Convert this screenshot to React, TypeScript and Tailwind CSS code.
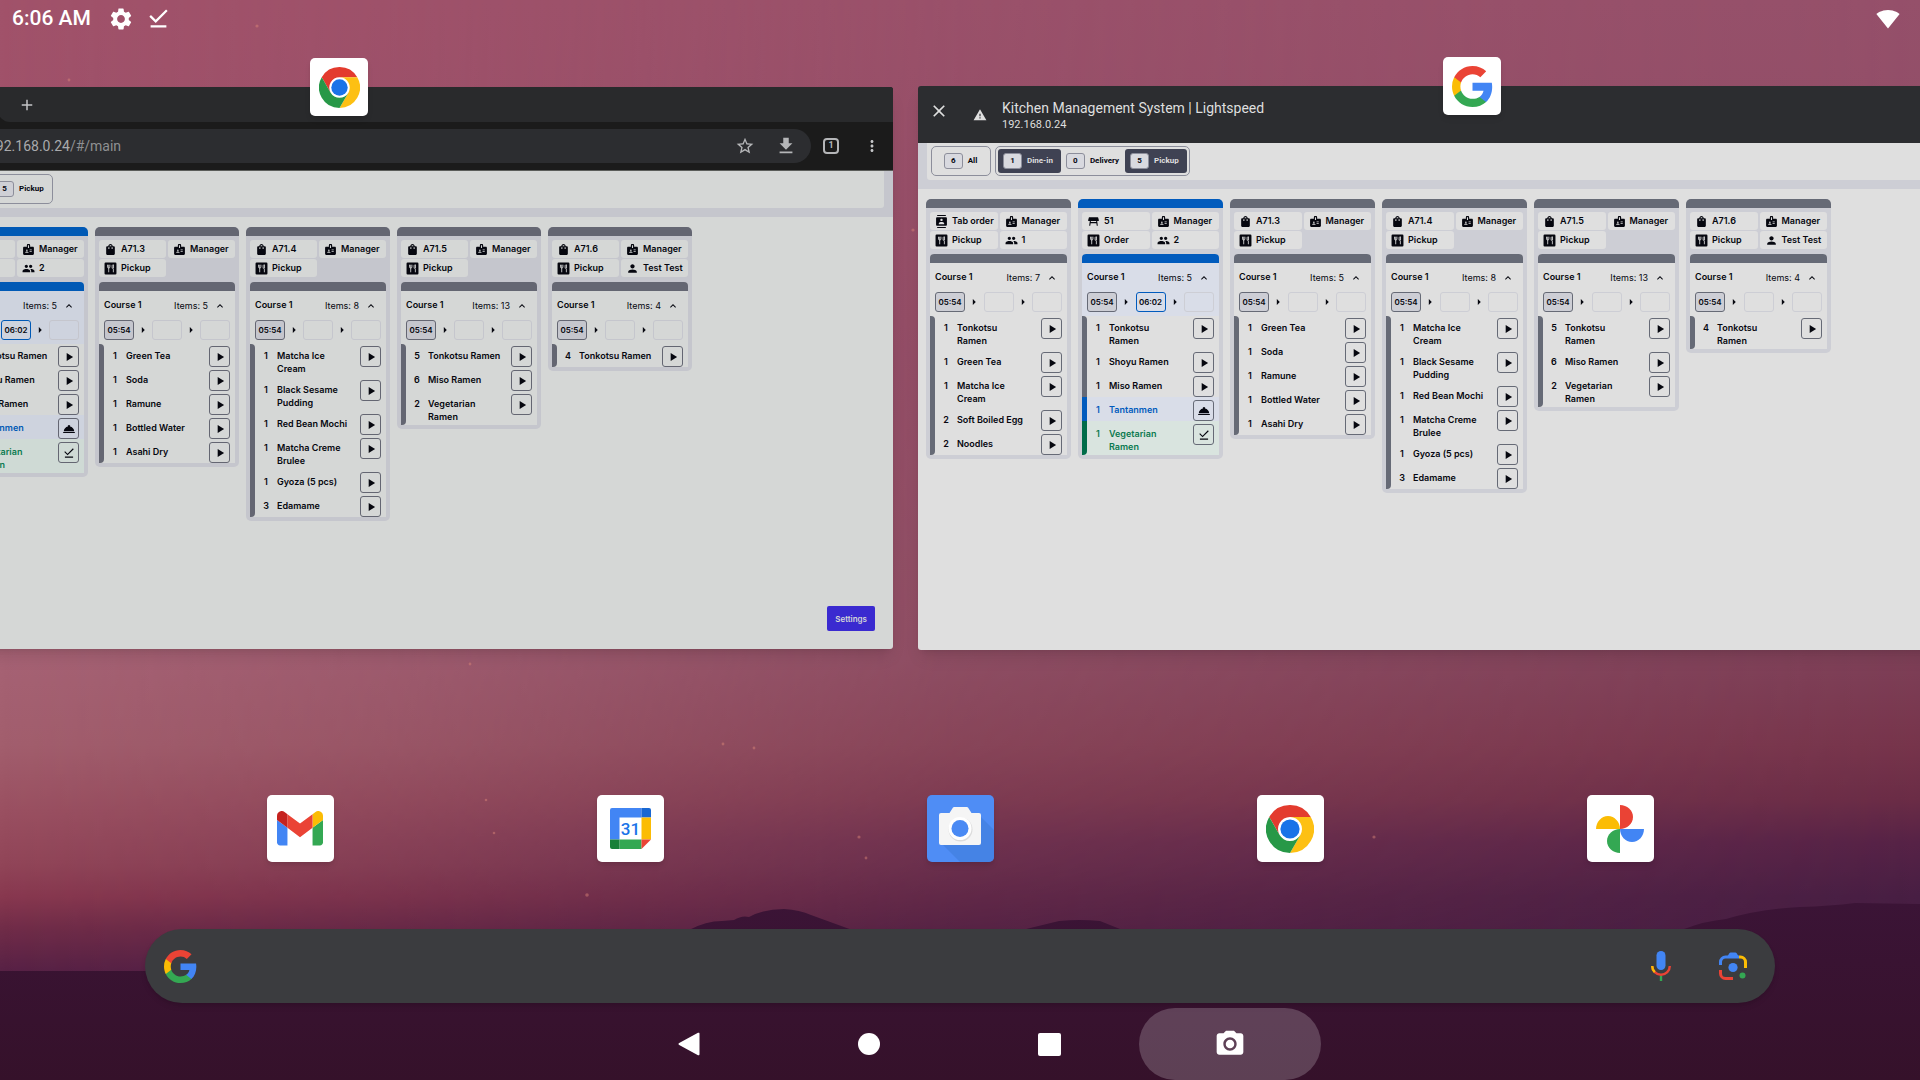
import React from 'react';
import type { IconType } from 'react-icons';
import {
  MdAdd,
  MdArrowRight,
  MdBadge,
  MdClose,
  MdContacts,
  MdDownloadDone,
  MdFileDownload,
  MdGroup,
  MdKeyboardArrowUp,
  MdMoreVert,
  MdPerson,
  MdPhotoCamera,
  MdPlayArrow,
  MdRoomService,
  MdSettings,
  MdShoppingBag,
  MdSignalWifi4Bar,
  MdStarBorder,
  MdTableRestaurant,
  MdWarning,
} from 'react-icons/md';

type ItemStatus = 'new' | 'started' | 'done';

interface OrderItem {
  qty: number;
  name: string;
  status?: ItemStatus;
}

interface OrderInfo {
  icon: React.ElementType;
  label: string;
}

interface Order {
  id: string;
  info: OrderInfo[];
  count: number;
  started?: string;
  items: OrderItem[];
}

const DiningIcon: React.FC<{ className?: string }> = ({ className }) => (
  <svg viewBox="0 0 24 24" className={className} aria-hidden="true">
    <rect x="1" y="1" width="22" height="22" rx="2" fill="currentColor" />
    <path
      d="M6.5 5v4a2.2 2.2 0 0 0 4.4 0V5M8.7 5v14M17.3 19v-6M15 6.5v5h2.6V5.2c-1.6 0-2.6.6-2.6 1.3z"
      fill="none"
      stroke="var(--page)"
      strokeWidth="1.6"
    />
  </svg>
);

const manager: OrderInfo = { icon: MdBadge, label: 'Manager' };
const pickup: OrderInfo = { icon: DiningIcon, label: 'Pickup' };

const orders: Order[] = [
  {
    id: 'tab',
    info: [{ icon: MdContacts, label: 'Tab order' }, manager, pickup, { icon: MdGroup, label: '1' }],
    count: 7,
    items: [
      { qty: 1, name: 'Tonkotsu Ramen' },
      { qty: 1, name: 'Green Tea' },
      { qty: 1, name: 'Matcha Ice Cream' },
      { qty: 2, name: 'Soft Boiled Egg' },
      { qty: 2, name: 'Noodles' },
    ],
  },
  {
    id: '51',
    info: [
      { icon: MdTableRestaurant, label: '51' },
      manager,
      { icon: DiningIcon, label: 'Order' },
      { icon: MdGroup, label: '2' },
    ],
    count: 5,
    started: '06:02',
    items: [
      { qty: 1, name: 'Tonkotsu Ramen' },
      { qty: 1, name: 'Shoyu Ramen' },
      { qty: 1, name: 'Miso Ramen' },
      { qty: 1, name: 'Tantanmen', status: 'started' },
      { qty: 1, name: 'Vegetarian Ramen', status: 'done' },
    ],
  },
  {
    id: 'A71.3',
    info: [{ icon: MdShoppingBag, label: 'A71.3' }, manager, pickup],
    count: 5,
    items: [
      { qty: 1, name: 'Green Tea' },
      { qty: 1, name: 'Soda' },
      { qty: 1, name: 'Ramune' },
      { qty: 1, name: 'Bottled Water' },
      { qty: 1, name: 'Asahi Dry' },
    ],
  },
  {
    id: 'A71.4',
    info: [{ icon: MdShoppingBag, label: 'A71.4' }, manager, pickup],
    count: 8,
    items: [
      { qty: 1, name: 'Matcha Ice Cream' },
      { qty: 1, name: 'Black Sesame Pudding' },
      { qty: 1, name: 'Red Bean Mochi' },
      { qty: 1, name: 'Matcha Creme Brulee' },
      { qty: 1, name: 'Gyoza (5 pcs)' },
      { qty: 3, name: 'Edamame' },
    ],
  },
  {
    id: 'A71.5',
    info: [{ icon: MdShoppingBag, label: 'A71.5' }, manager, pickup],
    count: 13,
    items: [
      { qty: 5, name: 'Tonkotsu Ramen' },
      { qty: 6, name: 'Miso Ramen' },
      { qty: 2, name: 'Vegetarian Ramen' },
    ],
  },
  {
    id: 'A71.6',
    info: [{ icon: MdShoppingBag, label: 'A71.6' }, manager, pickup, { icon: MdPerson, label: 'Test Test' }],
    count: 4,
    items: [{ qty: 4, name: 'Tonkotsu Ramen' }],
  },
];

const rowStyles: Record<ItemStatus, { row: string; bar: string; icon: IconType; label: string }> = {
  new: { row: '', bar: 'bg-(--bar)', icon: MdPlayArrow, label: 'Start' },
  started: { row: 'bg-(--active) text-(--blue)', bar: 'bg-(--blue)', icon: MdRoomService, label: 'Serve' },
  done: { row: 'bg-(--green-bg) text-[#0b7a50]', bar: 'bg-[#006c49]', icon: MdDownloadDone, label: 'Completed' },
};

const ItemRow: React.FC<{ item: OrderItem }> = ({ item }) => {
  const style = rowStyles[item.status ?? 'new'];
  const Icon = style.icon;

  return (
    <li className={`group flex ${style.row}`}>
      <span className={`w-[5px] shrink-0 group-first:rounded-tr group-last:rounded-br ${style.bar}`} />
      <div className="flex flex-1 items-start pt-[3px] pr-[5px] group-first:pt-0.5">
        <span className="w-[22px] shrink-0 pt-[3px] text-center leading-[13px]">{item.qty}</span>
        <span className="max-w-(--name-w) pt-[3px] pb-0.5 leading-[13px]">{item.name}</span>
        <button
          aria-label={`${style.label} ${item.name}`}
          className="ml-auto flex size-[21px] shrink-0 items-center justify-center rounded-[3px] border border-(--bar) text-[#06070f]"
        >
          <Icon className="size-[14px]" />
        </button>
      </div>
    </li>
  );
};

const OrderCard: React.FC<{ order: Order }> = ({ order }) => {
  const bar = order.started ? 'bg-(--blue)' : 'bg-(--bar)';

  return (
    <article className="w-(--card-w) shrink-0 overflow-hidden rounded-[5px] bg-(--card) pb-1">
      <div className={`h-[9px] ${bar}`} />
      <div className="px-1 pt-1">
        <div className="grid grid-cols-2 gap-x-0.5 gap-y-px font-semibold">
          {order.info.map(({ icon: Icon, label }) => (
            <div key={label} className="flex h-[18px] items-center gap-1 rounded-[3px] bg-(--page) pl-[5px]">
              <Icon className="size-[13px] shrink-0" />
              <span className="whitespace-nowrap">{label}</span>
            </div>
          ))}
        </div>
        <div className="mt-[5px] overflow-hidden rounded-t-[4px] bg-(--page)">
          <div className={`h-[9px] ${bar}`} />
          <div className={`px-[5px] pt-2 pb-1 ${order.started ? 'bg-(--active)' : ''}`}>
            <div className="flex h-3 items-center">
              <h3 className="font-semibold">Course 1</h3>
              <span className="mt-0.5 ml-auto">Items: {order.count}</span>
              <button aria-label="Collapse course" className="mt-0.5 mr-1 ml-1.5">
                <MdKeyboardArrowUp className="size-3" />
              </button>
            </div>
            <div className="mt-[9px] flex h-5 items-center justify-between text-[8px] font-semibold">
              <span className="flex h-5 w-[30px] items-center justify-center rounded-[3px] border border-(--bar) bg-(--card)">
                05:54
              </span>
              <MdArrowRight className="size-3.5" />
              <span
                className={`flex h-5 w-[30px] items-center justify-center rounded-[3px] border ${
                  order.started ? 'border-(--blue)' : 'border-(--card)'
                }`}
              >
                {order.started}
              </span>
              <MdArrowRight className="size-3.5" />
              <span className="h-5 w-[30px] rounded-[3px] border border-(--card)" />
            </div>
          </div>
          <ul className="font-semibold">
            {order.items.map((item) => (
              <ItemRow key={item.name} item={item} />
            ))}
          </ul>
        </div>
      </div>
    </article>
  );
};

const FilterChip: React.FC<{ count: number; label: string; active?: boolean }> = ({ count, label, active }) => (
  <button
    aria-pressed={!!active}
    className={`flex h-6 items-center gap-[5px] rounded-[3px] pl-[5px] ${
      active ? 'bg-[#3f4253] pr-2 text-[#dfdfdf]' : 'pr-1.5'
    }`}
  >
    <span className="flex h-4 w-[19px] items-center justify-center rounded-[3px] border border-[#8c8e9b] bg-(--chip) text-[#06070f]">
      {count}
    </span>
    {label}
  </button>
);

const Board: React.FC<{ highlight: boolean }> = ({ highlight }) => (
  <div className="flex flex-1 flex-col bg-(--page) text-[9px] text-[#06070f]">
    <div className="bg-(--card) px-[9px] pb-[9px]">
      <div className="flex gap-1 rounded-b-[3px] bg-(--page) px-1 pt-[3px] pb-1 font-[Roboto,sans-serif] text-[8px] font-bold">
        <div className="flex w-[60px] items-center justify-center rounded-[5px] border border-[#8c8e9b]">
          <FilterChip count={6} label="All" />
        </div>
        <div className="flex rounded-[5px] border border-[#8c8e9b] p-0.5">
          <FilterChip count={1} label="Dine-in" active={highlight} />
          <FilterChip count={0} label="Delivery" />
          <FilterChip count={5} label="Pickup" active={highlight} />
        </div>
      </div>
    </div>
    <main className="flex items-start gap-[7px] px-2 pt-2.5">
      {orders.map((order) => (
        <OrderCard key={order.id} order={order} />
      ))}
    </main>
  </div>
);

const ChromeLogo: React.FC<{ className?: string }> = ({ className }) => (
  <svg viewBox="0 0 48 48" className={className} aria-hidden="true">
    <circle cx="24" cy="24" r="13" fill="#fff" />
    <path d="M24 12H44.785A24 24 0 0 0 3.215 12L13.608 30A12 12 0 0 1 24 12z" fill="#e33b2e" />
    <path d="M44.785 12H24A12 12 0 0 1 34.392 30L24 48A24 24 0 0 0 44.785 12z" fill="#fdc013" />
    <path d="M3.215 12A24 24 0 0 0 24 48L34.392 30A12 12 0 0 1 13.608 30z" fill="#279847" />
    <circle cx="24" cy="24" r="9.6" fill="#1a73e8" />
  </svg>
);

const GoogleLogo: React.FC<{ className?: string }> = ({ className }) => (
  <svg viewBox="2 2 44 44" className={className} aria-hidden="true">
    <path
      fill="#4285f4"
      d="M45.12 24.5c0-1.56-.14-3.06-.4-4.5H24v8.51h11.84c-.51 2.75-2.06 5.08-4.39 6.64v5.52h7.11c4.16-3.83 6.56-9.47 6.56-16.17z"
    />
    <path
      fill="#34a853"
      d="M24 46c5.94 0 10.92-1.97 14.56-5.33l-7.11-5.52c-1.97 1.32-4.49 2.1-7.45 2.1-5.73 0-10.58-3.87-12.31-9.07H4.34v5.7C7.96 41.07 15.4 46 24 46z"
    />
    <path fill="#fbbc04" d="M11.69 28.18C11.25 26.86 11 25.45 11 24s.25-2.86.69-4.18v-5.7H4.34A21.99 21.99 0 0 0 2 24c0 3.55.85 6.91 2.34 9.88l7.35-5.7z" />
    <path
      fill="#ea4335"
      d="M24 10.75c3.23 0 6.13 1.11 8.41 3.29l6.31-6.31C34.91 4.18 29.93 2 24 2 15.4 2 7.96 6.93 4.34 14.12l7.35 5.7c1.73-5.2 6.58-9.07 12.31-9.07z"
    />
  </svg>
);

const GmailLogo = () => (
  <svg viewBox="52 42 88 66" className="w-[46px]" aria-hidden="true">
    <path fill="#4285f4" d="M58 108h14V74L52 59v43c0 3.32 2.69 6 6 6" />
    <path fill="#34a853" d="M120 108h14c3.32 0 6-2.69 6-6V59l-20 15" />
    <path fill="#fbbc04" d="M120 48v26l20-15v-8c0-7.42-8.47-11.65-14.4-7.2" />
    <path fill="#ea4335" d="M72 74V48l24 18 24-18v26L96 92" />
    <path fill="#c5221f" d="M52 51v8l20 15V48l-5.6-4.2c-5.94-4.45-14.4-.22-14.4 7.2" />
  </svg>
);

const CalendarLogo = () => (
  <svg viewBox="0 0 41 41" className="w-[41px]" aria-hidden="true">
    <path d="M2 0H31.500V9.500H9.500V31.500H0V2a2 2 0 0 1 2-2z" fill="#4285f4" />
    <path d="M31.500 0H39a2 2 0 0 1 2 2V9.500H31.500z" fill="#1967d2" />
    <path d="M31.500 9.500H41V31.500H31.500z" fill="#fbbc04" />
    <path d="M9.500 31.500H31.500V41H9.500z" fill="#34a853" />
    <path d="M0 31.500H9.500V41H2a2 2 0 0 1-2-2z" fill="#188038" />
    <path d="M31.500 31.500H41L31.500 41z" fill="#ea4335" />
    <text x="20.500" y="26.500" textAnchor="middle" fontFamily="Roboto, sans-serif" fontSize="17" fontWeight="500" fill="#1a73e8">
      31
    </text>
  </svg>
);

const CameraLogo = () => (
  <svg viewBox="0 0 67 67" className="w-full" aria-hidden="true">
    <path d="M54 22L67 35V67H33L15 49z" fill="#3f7ddb" opacity=".6" />
    <path d="M15 18h7.500l3.500-5.500q.5-.5 1-.5h13q.5 0 1 .5l3.500 5.500H52q2 0 2 2V48q0 2-2 2H14q-2 0-2-2V20q0-2 2-2z" fill="#f5f5f5" />
    <circle cx="33.500" cy="34.500" r="12" fill="#dcdcdc" />
    <circle cx="33" cy="33.500" r="11.500" fill="#fff" />
    <circle cx="33" cy="33.500" r="8.500" fill="#4a8af4" />
  </svg>
);

const PhotosLogo = () => (
  <svg viewBox="0 0 48 48" className="w-12" aria-hidden="true">
    <path d="M24 0c7 0 13 5.400 13 12s-6 12-13 12z" fill="#ea4335" />
    <path d="M0 24c0-7 5.400-13 12-13s12 6 12 13z" fill="#fbbc04" />
    <path d="M48 24c0 7-5.400 13-12 13s-12-6-12-13z" fill="#4285f4" />
    <path d="M24 48c-7 0-13-5.400-13-12s6-12 13-12z" fill="#34a853" />
  </svg>
);

const MicIcon = () => (
  <svg viewBox="0 0 20 30" className="h-[30px]" aria-hidden="true">
    <rect x="5.500" width="9" height="19" rx="4.500" fill="#4285f4" />
    <path d="M1.200 15a8.800 8.800 0 0 0 17.600 0" fill="none" stroke="#ea4335" strokeWidth="2.400" />
    <path d="M1.200 15a8.800 8.800 0 0 0 2.600 6.200" fill="none" stroke="#fbbc04" strokeWidth="2.400" />
    <path d="M10 25v5" stroke="#34a853" strokeWidth="2.400" />
  </svg>
);

const LensIcon = () => (
  <svg viewBox="0 0 28 28" className="w-7" aria-hidden="true">
    <g fill="none" strokeWidth="3">
      <path d="M1.500 13V10a5 5 0 0 1 5-5H20" stroke="#4285f4" />
      <path d="M20 5h1.500a5 5 0 0 1 5 5v6" stroke="#fbbc04" />
      <path d="M1.500 18v3.500a5 5 0 0 0 5 5H14" stroke="#ea4335" />
    </g>
    <path d="M8 5l2.500-4q.5-.5 1-.5h5q.5 0 1 .5L20 5z" fill="#4285f4" />
    <circle cx="14" cy="15.500" r="4.600" fill="#4285f4" />
    <circle cx="23.500" cy="23.500" r="3" fill="#34a853" />
  </svg>
);

const Wallpaper = () => (
  <svg
    viewBox="0 0 1920 1080"
    preserveAspectRatio="none"
    className="absolute inset-0 -z-10 size-full"
    aria-hidden="true"
  >
    <defs>
      <linearGradient id="skyLeft" x1="0" y1="0" x2="0" y2="1">
        <stop offset="0" stopColor="#a1526a" />
        <stop offset=".3" stopColor="#9c5069" />
        <stop offset=".61" stopColor="#a66274" />
        <stop offset=".69" stopColor="#a25e6d" />
        <stop offset=".75" stopColor="#9a5061" />
        <stop offset=".8" stopColor="#914558" />
        <stop offset=".83" stopColor="#88384f" />
        <stop offset=".86" stopColor="#702c48" />
        <stop offset=".9" stopColor="#572145" />
      </linearGradient>
      <linearGradient id="skyRight" x1="0" y1="0" x2="0" y2="1">
        <stop offset="0" stopColor="#95506a" />
        <stop offset=".3" stopColor="#8c4b64" />
        <stop offset=".61" stopColor="#7d3f57" />
        <stop offset=".69" stopColor="#76344b" />
        <stop offset=".74" stopColor="#6a2c46" />
        <stop offset=".78" stopColor="#562246" />
        <stop offset=".83" stopColor="#471e43" />
        <stop offset=".9" stopColor="#451d42" />
      </linearGradient>
      <linearGradient id="fade" x1="0" y1="0" x2="1" y2="0">
        <stop offset="0" stopColor="#000" />
        <stop offset=".2" stopColor="#333" />
        <stop offset=".5" stopColor="#999" />
        <stop offset="1" stopColor="#fff" />
      </linearGradient>
      <linearGradient id="ground" x1="0" y1="0" x2="0" y2="1">
        <stop offset="0" stopColor="#3b1436" />
        <stop offset="1" stopColor="#35112a" />
      </linearGradient>
      <mask id="fadeMask">
        <rect width="1920" height="1080" fill="url(#fade)" />
      </mask>
    </defs>
    <rect width="1920" height="1080" fill="url(#skyLeft)" />
    <rect width="1920" height="1080" fill="url(#skyRight)" mask="url(#fadeMask)" />
    <path
      d="M0 971H560L689 930Q706 921 722 921L734 920Q742 915 749 917Q764 909 784 909Q800 910 811 915L855 931L960 945L1022 930L1059 921Q1080 919 1100 921L1125 931L1300 960L1600 950L1684 929Q1705 921 1726 919Q1760 909 1800 907Q1830 906 1855 903L1920 904V1080H0z"
      fill="url(#ground)"
    />
    <g fill="#e08a7a" opacity=".45">
      <circle cx="587" cy="895" r="1.800" />
      <circle cx="859" cy="837" r="1.600" />
      <circle cx="866" cy="858" r="1.400" />
      <circle cx="1374" cy="837" r="1.600" />
      <circle cx="494" cy="833" r="1.300" />
      <circle cx="486" cy="800" r="1.300" />
      <circle cx="723" cy="744" r="1.400" />
      <circle cx="754" cy="748" r="1.400" />
      <circle cx="470" cy="664" r="1.400" />
      <circle cx="257" cy="26" r="1.600" />
      <circle cx="69" cy="80" r="1.400" />
      <circle cx="913" cy="230" r="1.600" />
    </g>
  </svg>
);

const AppBadge: React.FC<{ children: React.ReactNode }> = ({ children }) => (
  <div className="absolute -top-[29px] left-1/2 z-10 flex size-[58px] -translate-x-1/2 items-center justify-center rounded-[5px] bg-white shadow-md">
    {children}
  </div>
);

const BrowserWindow = () => (
  <section className="relative flex h-[562px] w-[1108px] shrink-0 flex-col font-[Inter,sans-serif] [--active:#ced3de] [--bar:#646672] [--blue:#0059b5] [--card:#c5c6cd] [--card-w:144px] [--chip:#cfd0d6] [--green-bg:#cfdad5] [--name-w:75px] [--page:#d5d7d6]">
    <AppBadge>
      <ChromeLogo className="size-[41px]" />
    </AppBadge>
    <div className="flex flex-1 flex-col overflow-hidden rounded-[3px] shadow-lg">
      <div className="flex h-[35px] bg-[#1b1b1b] pl-[213px]">
        <div className="flex flex-1 items-center rounded-bl-[12px] bg-[#292a2c] pl-5">
          <button aria-label="New tab" className="text-[#c4c5c7]">
            <MdAdd className="size-[18px]" />
          </button>
        </div>
      </div>
      <div className="flex h-[49px] items-center border-b border-[#5b5d5a] bg-[#1b1b1b] pr-3">
        <div className="flex h-[34px] flex-1 items-center rounded-full bg-[#2c2d30] pr-3.5 pl-[203px] text-[#b5b6b8]">
          <a href="#/main" className="font-[Roboto,sans-serif] text-[14px] text-[#a9aaac]">
            192.168.0.24<span className="text-[#8f9092]">/#/main</span>
          </a>
          <button aria-label="Bookmark" className="ml-auto">
            <MdStarBorder className="size-5" />
          </button>
          <button aria-label="Downloads" className="ml-5">
            <MdFileDownload className="size-[22px]" />
          </button>
        </div>
        <button
          aria-label="Tabs"
          className="ml-3 flex size-4 items-center justify-center rounded-[4px] border-2 border-[#b5b6b8] font-[Roboto,sans-serif] text-[9px] font-bold text-[#b5b6b8]"
        >
          1
        </button>
        <button aria-label="Menu" className="ml-6 text-[#c4c5c7]">
          <MdMoreVert className="size-[18px]" />
        </button>
      </div>
      <Board highlight={false} />
      <div className="flex justify-end bg-(--page) pr-[18px] pb-[18px]">
        <button className="h-[25px] rounded-[2px] bg-[#3a2ad0] px-2 text-[8px] font-semibold text-[#d5d7d6]">
          Settings
        </button>
      </div>
    </div>
  </section>
);

const KitchenWindow = () => (
  <section className="relative flex h-[564px] w-[1108px] shrink-0 flex-col font-[Inter,sans-serif] [--active:#d9dde8] [--bar:#666a76] [--blue:#015bbd] [--card:#cdced5] [--card-w:145px] [--chip:#d8d9df] [--green-bg:#d9e4df] [--name-w:72px] [--page:#dfdfdf]">
    <AppBadge>
      <GoogleLogo className="size-[41px]" />
    </AppBadge>
    <div className="flex flex-1 flex-col overflow-hidden rounded-[3px] shadow-lg">
      <header className="flex h-[57px] items-center bg-[#2c2d30] pl-[11px] font-[Roboto,sans-serif] text-[#dfdfdf]">
        <button aria-label="Close" className="-mt-2">
          <MdClose className="size-5" />
        </button>
        <MdWarning className="ml-6 size-[14px]" />
        <div className="ml-[15px]">
          <h1 className="text-[14px] leading-[19px]">Kitchen Management System | Lightspeed</h1>
          <p className="text-[11px] leading-[13px]">192.168.0.24</p>
        </div>
      </header>
      <Board highlight />
    </div>
  </section>
);

const dockApps = [
  { name: 'Gmail', tile: 'bg-white', logo: <GmailLogo /> },
  { name: 'Calendar', tile: 'bg-white', logo: <CalendarLogo /> },
  { name: 'Camera', tile: 'bg-[#4f8df5]', logo: <CameraLogo /> },
  { name: 'Chrome', tile: 'bg-white', logo: <ChromeLogo className="size-12" /> },
  { name: 'Photos', tile: 'bg-white', logo: <PhotosLogo /> },
];

export default function App() {
  return (
    <div className="relative isolate flex min-h-screen flex-col overflow-hidden font-[Roboto,sans-serif]">
      <Wallpaper />
      <header className="flex h-[37px] items-center px-3 text-white">
        <time className="text-[21px] font-medium">6:06 AM</time>
        <MdSettings className="ml-[17px] size-[26px]" />
        <MdDownloadDone className="ml-[11px] size-[27px]" />
        <MdSignalWifi4Bar className="mr-2 ml-auto size-6" />
      </header>

      <div className="mt-[49px] -ml-[215px] flex items-center gap-[25px]">
        <BrowserWindow />
        <KitchenWindow />
      </div>

      <nav aria-label="Favorites" className="mx-auto mt-auto grid w-full max-w-[1650px] grid-cols-5 justify-items-center">
        {dockApps.map((app) => (
          <button
            key={app.name}
            aria-label={app.name}
            className={`flex size-[67px] items-center justify-center overflow-hidden rounded-[5px] shadow-md ${app.tile}`}
          >
            {app.logo}
          </button>
        ))}
      </nav>

      <div className="mx-[145px] mt-[67px] flex h-[74px] items-center rounded-full bg-[#3b3c3f] pr-7 pl-[19px] shadow-md">
        <GoogleLogo className="size-[33px]" />
        <input type="search" aria-label="Search" className="mx-4 h-full min-w-0 flex-1 bg-transparent text-xl text-white outline-none" />
        <button aria-label="Voice search">
          <MicIcon />
        </button>
        <button aria-label="Search with camera" className="ml-12">
          <LensIcon />
        </button>
      </div>

      <nav aria-label="System" className="mx-auto mt-[5px] flex h-[72px] text-white">
        <button aria-label="Back" className="flex w-[180px] items-center justify-center">
          <svg viewBox="0 0 22 24" className="h-6" aria-hidden="true">
            <path d="M20 .800a1 1 0 0 1 1.500.900v20.600a1 1 0 0 1-1.500.900L1.200 13a1.200 1.200 0 0 1 0-2z" fill="currentColor" />
          </svg>
        </button>
        <button aria-label="Home" className="flex w-[180px] items-center justify-center">
          <span className="size-[22px] rounded-full bg-white" />
        </button>
        <button aria-label="Overview" className="flex w-[180px] items-center justify-center">
          <span className="size-[23px] rounded-[2px] bg-white" />
        </button>
        <button aria-label="Screenshot" className="flex w-[182px] items-center justify-center rounded-full bg-white/20">
          <MdPhotoCamera className="size-8" />
        </button>
      </nav>
    </div>
  );
}
